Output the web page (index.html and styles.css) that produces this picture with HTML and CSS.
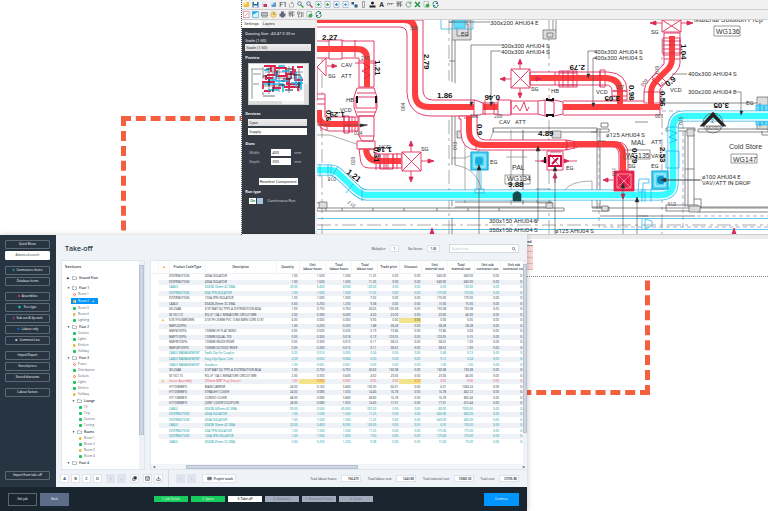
FILE: index.html
```html
<!DOCTYPE html>
<html lang="en">
<head>
<meta charset="utf-8">
<title>Take-off</title>
<link rel="stylesheet" href="styles.css">
</head>
<body>
<div class="desktop">
<div class="frame"></div>

<section class="cad">
  <div class="cad-tools" id="tools-main"></div>
  <div class="cad-tools" id="tools-view"></div>
  <div class="cad-body">
    <form class="cad-panel">
      <div class="tabs"><button type="button" class="tab active">Settings</button><button type="button" class="tab">Layers</button></div>
      <div class="panel-body">
        <p>Drawing Size : A0 47 X 33 m</p>
        <label for="scale">Scale (1:50)</label>
        <select id="scale" class="wide"><option>Scale (1:50)</option></select>
        <h3>Preview</h3>
        <div class="preview">
          <svg viewBox="0 0 57 37" preserveAspectRatio="none">
            <path d="M2 5H14M3 5V35M4 10H12M4 20H10M14 3V14M20 1V30M30 1V28M40 2V29M50 2V28M13 14H54M14 22H52M16 8H54M24 1V24" stroke="#778" stroke-width=".8" fill="none"/>
            <path d="M15 2H26V11H18M27 4H37V10H44V2M14 25V18H25V24H32M29 12H38V20H52M46 5V16H54M35 23H49V27M17 11V16M40 14V25M22 3V8M16 14H24M32 17H36M48 3H54M15 27H22" stroke="#d8234e" stroke-width="1.800" fill="none"/>
            <path d="M14 20H34V28M19 26H30M27 8V17H40M47 8V23M30 2H36M42 19H54M15 6H20M33 7H40M52 12V26M20 16H26" stroke="#18b4e6" stroke-width="1.600" fill="none"/>
            <path d="M17 5H22M28 6V13M34 15H42M44 11H52M20 15V22M38 5H44M36 26H44M14 12H18M30 21H36M42 7V15M50 18V24M24 23V28" stroke="#223" stroke-width="1.200" fill="none"/>
            <path d="M14 32H26M14 28V31" stroke="#555" stroke-width=".8"/>
          </svg>
          <i class="pv-bar"></i><i class="ph-bar"></i>
        </div>
        <h3>Services</h3>
        <div class="indent">
          <select aria-label="Service colour"><option>Cyan</option></select>
          <input type="text" aria-label="Service name" value="Supply">
        </div>
        <h3>Sizes</h3>
        <div class="size"><label for="w">Width</label><input id="w" value="400"><span>mm</span></div>
        <div class="size"><label for="d">Depth</label><input id="d" value="300"><span>mm</span></div>
        <button type="button" class="reselect">Reselect Component</button>
        <h3>Run type</h3>
        <label class="run"><input type="checkbox" checked><b>On</b><span>Continuous Run</span></label>
      </div>
    </form>
    <svg class="drawing" viewBox="317 21 451 214" preserveAspectRatio="xMinYMin slice">
      <rect x="317" y="21" width="451" height="214" fill="#fff"/>
      <!-- walls and grid lines -->
      <g fill="none" stroke="#888" stroke-width=".7">
        <path stroke-dasharray="14 4 3 4" d="M322 50V235M449 21V235M549 21V235M662 40V235M317 226H768"/>
        <path d="M323 50H331V60M328 40V52H336V40M317 136H330L374 151M511 131V206M523 131V206M506 158H527M465 204V130M494 130Q490 150 465 159M455 166Q480 170 482 196M564 192Q570 182 592 182V209M523 131V205M465 159H452M536 190H550V204H537Z"/>
        <path stroke="#555" d="M452 41V166M455 41V166M449 62H455M493 129H597V133H493ZM452 196V207M455 203H552V208H455M550 203V208M317 209H564V212H317ZM342 209V212M373 209V212M404 209V212M437 209V212M468 209V212M499 209V212M592 209H768M592 212H609V208H592M597 130V210M600 130V210M597 130H609V133H591M600 104H768M601 124V128H608V124ZM666 129H695V132H666ZM685 132V208M688 132V208M694 135V206M698 130H768V133H698ZM666 206H698V212H666ZM698 208H768M698 213H768M690 208V213M762 132V136H768M694 200H701V209M685 170H694M317 204H326V212M600 217H695"/>
        <path stroke="#666" fill="#ddd" d="M452 21H471V41H452ZM457 25H468V37H457ZM543 31H556V40H543ZM547 34H553V38H547ZM556 21V31M553 21V31M319 203H327V209H319ZM552 132H561V139H552ZM457 132H462V139H457ZM546 204H553V209H546ZM602 207H608V212H602ZM687 130H694V137H687ZM689 207H700V213H689ZM757 98H768V130H757Z"/>
        <path stroke-dasharray="4 3" stroke="#888cb8" d="M599 134V228H768M599 112H683V230M697 217H768M343 26V43H317"/>
      </g>
      <g stroke="#38b8e6" stroke-width=".8" fill="none">
        <path d="M317 219.500H768M317 230.500H768"/>
        <path d="M642 219V231M645 220V230L652 227V222L645 220M441 21V30H473V21M449 23H468"/>
        <path fill="#62dcff" d="M454 21H465V29H454ZM756 106H768V126H756Z"/>
        <path d="M760 104V128M764 107V125" stroke="#168fb8"/>
      </g>
      <!-- supply duct -->
      <g fill="none" stroke-linejoin="round">
        <path stroke="#2bb6e8" stroke-width="11" d="M317 171H329Q335 171 339 175L355 190Q361 196 367 196H660Q673 196 673 184V129Q673 117 685 117H768"/>
        <path stroke="#fff" stroke-width="9.500" d="M317 171H329Q335 171 339 175L355 190Q361 196 367 196H660Q673 196 673 184V129Q673 117 685 117H768"/>
        <path stroke="#38fbff" stroke-width="6.500" d="M317 171H329Q335 171 339 175L355 190Q361 196 367 196H660Q673 196 673 184V129Q673 117 685 117H768"/>
        <path stroke="#2bb6e8" stroke-width=".8" d="M320 165V178M328 166V178M331 166V177M338 167L332 178M353 185L346 194M362 190V202M642 190V203M645 190V203M651 190V203M666 152H679V169H666ZM667 128H679M668 131L677 134L669 138L677 141L669 144M477 172V190M481 172V190M475 190H484V194H475ZM639 180H649V184H643V193H638Z"/>
        <path fill="#50d5f4" stroke="#12a5dc" stroke-width="1.200" d="M471 153H488V171H471ZM652 172H668V190H652Z"/>
        <path stroke="#c9f7ff" stroke-width="1" d="M474 156H485V168H474ZM655 175H665V187H655Z"/>
        <circle cx="479" cy="162" r="4" fill="#18aee0"/><circle cx="661" cy="181" r="4" fill="#0d8ec2"/>
      </g>
      <!-- extract duct outlines -->
      <g fill="#fff" stroke="#e02a5c" stroke-width=".9">
        <path d="M317 42H374V88H359V59H317M317 28H400Q407 28 407 36V94Q409 117 432 117H475L483 115H498M317 21H423V92Q424 101 433 101H475L483 104H498"/>
        <path d="M498 101H511V116H498ZM511 102H538V115H511ZM538 102L545 101V117L538 115M545 101L554 103V115L545 117M554 101L563 103V115L554 117M563 102H660V116H563M474 101V117M483 103V115"/>
        <path d="M513 110L516 106L520 112L524 103L527 112L529 108" fill="none"/>
        <path d="M511 70H530V89H511ZM511 70L530 89M530 70L511 89M530 73H608Q627 74 627 92V101H612V92Q612 86 606 86H530ZM555 73V86M600 71H605V88H600ZM559 72H577V88H559ZM612 92H627M612 97H627"/>
        <path d="M662 21H681V33H662ZM662 33L681 21M662 21L681 33M664 34H680V64Q680 69 676 73L660 90V104H644V93Q644 86 650 80L664 65ZM663 39H680V56H663ZM663 50H681M664 60H680M652 78L661 87L666 83L657 74Z"/>
        <path d="M459 117H477V132Q477 140 485 141H566L578 143H618Q628 144 628 155V171H619V155Q618 148 613 148H578L566 151H478Q461 151 461 133V120H459ZM464 119H472M566 141V151M476 141V151"/>
        <path d="M357 89H374L377 98V109L374 117H357L354 108V98ZM357 94H375M356 98V109H376V98ZM357 113H375M359 117H374V137H359ZM359 137L362 142H373L374 137M357 142H375V150H357ZM359 150H374V154L378 155H402V169H369Q360 169 360 157ZM376 153V171M380 155V170H393V155M397 154V170M386 155V170"/>
        <path d="M402 153H421V172H402ZM402 153L421 172M421 153L402 172M329 41H342V60H329ZM355 41V58M359 62H374M355 64H377M317 68L326 59V77L317 68V102M317 95H325V118H358V132H329Q317 130 317 119M344 117H349V134H344ZM352 117V134M355 118V132M327 121V131M317 100H325M317 105H325"/>
        <path d="M547 152H563V171H547ZM550 155L560 168M550 153H561"/>
      </g>
      <!-- extract duct flow bands -->
      <g fill="none" stroke="#ff3f3f" stroke-width="6">
        <path d="M317 50H357Q367 50 367 60V88"/>
        <path d="M317 21H404Q415 21 415 32V94Q415 108 429 108H474M483 108H498M563 108H660"/>
        <path d="M530 79H606Q620 80 620 92V108M672 37V60Q672 67 666 72L656 82Q651 87 651 95V108"/>
        <path d="M469 117V131Q469 146 484 146H566L578 145H614Q623 146 623 156V172"/>
        <path d="M319 111V117Q319 125 328 125H358M366 150Q367 162 378 162H401"/>
      </g>
      <g fill="none" stroke="#d4214e" stroke-width=".8">
        <path d="M363 64L370 68L362 72L370 76L364 80M559 74H577M559 86H577M563 72V88M568 72V88M573 72V88M663 42H681M663 46H681M663 54H681M380 155V170M384 155V170M388 155V170M393 155V170M321 119V132M344 117V134M349 117V134M652 80L661 88M644 93H660M567 141V151M574 142V150M485 101V116M494 103V115M613 92H627M600 72V88"/>
        <path fill="#e82350" d="M614 172H634V192H614Z"/><path stroke="#ffacac" d="M617 175H631V189H617ZM617 175L631 189M631 175L617 189"/><circle cx="624" cy="182" r="4"/>
        <path stroke="#d00c3e" stroke-width="2" d="M549 157H561V167H549ZM552 165L558 159"/>
        <path fill="#e02a5c" d="M520 60L518 65H522ZM520 65V70M520 99L518 94H522ZM520 94V89M500 80L505 78V82ZM505 80H511M541 80L536 78V82ZM411 142L409 147H413ZM411 147V153M411 183L409 178H413ZM411 178V172M434 162L428 160V164ZM428 162H421M650 24L656 22V26ZM656 24H662M693 24L687 22V26ZM687 24H681M337 67L332 65V69ZM332 67H327M541 162L546 160V164ZM535 162H541M569 162L564 160V164ZM569 162H577M555 174L553 179H557ZM555 179V184M603 181L608 179V183ZM608 181H613M734 229L732 235H736ZM432 229L430 235H434ZM623 200L621 195H625Z"/>
      </g>
      <g stroke="#444" stroke-width=".6" fill="none">
        <path d="M471 107V46H501M491 107V52H501M449 23H490M588 78V52H596M593 107V59H596M741 115V93H735M672 75H687M538 152V222H533M479 166V235M555 168V235M623 188V235M637 199V235M665 181H702M598 142V148M598 142H606M660 181H700M345 126H368M452 235V219M317 126H330"/>
        <path fill="#222" d="M470 103H473L471 107ZM490 103H493L491 107ZM587 75H590L588 79ZM592 104H595L593 108ZM740 112H743L741 116ZM536 152H540L538 147ZM477 171H481L479 166ZM553 172H557L555 167ZM621 189H625L623 184ZM635 203H639L637 198ZM360 125L367 126L360 128ZM666 179V183L661 181Z"/>
        <circle cx="713" cy="124" r="10"/><path fill="#222" d="M700 127L713 113L726 127H722L713 118L704 127Z"/><path d="M700 127H726M635 123H648M638 217H648"/>
        <path stroke="#111" stroke-width="2" d="M357 97V104M376 97V104M547 99V101H553V99M547 118V116H553V118M545 158V164"/>
        <path fill="#164b50" stroke="#164b50" d="M513 202V195Q517 190 521 195V202Z"/>
        <path d="M505 176H530V185H505ZM714 27H740V37H714ZM731 155H757V164H731ZM624 151H650V160H624Z" stroke="#555"/>
      </g>
      <g class="t">
        <text x="490" y="26">300x200 AHU04 E</text><text x="501" y="49">500x300 AHU04 S</text><text x="501" y="55">400x300 AHU04 S</text>
        <text x="594" y="55">400x300 AHU04 S</text><text x="594" y="61">400x300 AHU04 S</text><text x="688" y="77">400x300 AHU04 S</text><text x="688" y="95">300x200 AHU04 E</text>
        <text x="489" y="224">300x150 AHU04 S</text><text x="489" y="233">350x150 AHU04 S</text><text x="555" y="234">ø125 AHU04 S</text><text x="606" y="138">ø125 AHU04 S</text>
        <text x="702" y="180">ø100 AHU04 E</text><text x="702" y="186">VAV/ATT IN DROP</text>
        <text x="341" y="68">CAV</text><text x="328" y="79">SG</text><text x="341" y="79">ATT</text><text x="346" y="103">HB</text><text x="340" y="113">VCD</text><text x="379" y="150">VCD</text>
        <text x="421" y="152">SG</text><text x="461" y="37">EG</text><text x="531" y="92">SG</text><text x="551" y="94">HB</text><text x="596" y="95">VCD</text><text x="499" y="125">CAV</text><text x="515" y="125">ATT</text>
        <text x="490" y="165">EG</text><text x="566" y="171">EG</text><text x="651" y="35">SG</text><text x="670" y="93">VCD</text><text x="746" y="106">EG</text><text x="651" y="145">ATT</text><text x="651" y="159">VAV</text><text x="628" y="169">SG</text><text x="651" y="169">EG</text>
        <text class="s" x="711" y="124">2</text><text class="s" x="706" y="131">M2001</text>
        <text class="s" x="410" y="31">500</text><text class="s" x="361" y="61">210</text><text class="s" x="354" y="136">024</text><text class="s" x="470" y="119">500</text><text class="s" x="494" y="119">200</text><text class="s" x="616" y="90">007</text><text class="s" x="655" y="119">001</text>
        <text class="s" transform="translate(355 166) rotate(-90)">020</text><text class="s" transform="translate(457 151) rotate(-90)">013</text><text class="s" transform="translate(405 112) rotate(-90)">004</text><text class="s" transform="translate(643 88) rotate(-50)">009</text><text class="s" transform="translate(683 126) rotate(-90)">015</text><text class="s" transform="translate(336 178) rotate(180)">018</text><text class="s" transform="translate(356 206) rotate(215)">017</text><text class="s" transform="translate(676 203) rotate(180)">016</text><text class="s" transform="translate(616 177) rotate(-90)">011</text><text class="s" transform="translate(659 75) rotate(-90)">010</text>
      </g>
      <g class="t l">
        <text x="694" y="23">Material Solution Prep</text><text x="716" y="35">WG136</text><text x="729" y="150">Cold Store</text><text x="733" y="163">WG147</text><text x="631" y="146">MAL</text><text x="626" y="159">WG135</text><text x="512" y="171">PAL</text><text x="507" y="182">WG134</text>
      </g>
      <g class="t b">
        <text x="322" y="41">2.27</text><text x="437" y="99">1.86</text><text x="538" y="137">4.89</text><text x="508" y="188">9.88</text>
        <text transform="translate(375 61) rotate(90)">1.21</text><text transform="translate(424 55) rotate(90)">2.79</text><text transform="translate(500 96) rotate(180)">0.46</text><text transform="translate(585 66) rotate(180)">2.79</text><text transform="translate(477 125) rotate(90)">0.9</text>
        <text transform="translate(629 86) rotate(90)">0.98</text><text transform="translate(620 97) rotate(180)">3.05</text><text transform="translate(681 45) rotate(90)">1.04</text><text transform="translate(660 92) rotate(90)">0.56</text><text transform="translate(668 88) rotate(-40)">0.9</text><text transform="translate(729 104) rotate(180)">3.05</text>
        <text transform="translate(632 149) rotate(90)">0.79</text><text transform="translate(660 148) rotate(90)">2.53</text><text transform="translate(346 174) rotate(38)">1.21</text><text transform="translate(345 113) rotate(180)">1.29</text><text transform="translate(392 148) rotate(180)">1.16</text><text transform="translate(374 148) rotate(90)">0.31</text><text transform="translate(326 111) rotate(90)">0.6</text>
      </g>
    </svg>
  </div>
  <div class="cad-foot"><i class="foot-bar"></i><div class="legend"><span>ed</span><i></i><i></i><i></i><i></i></div></div>
</section>

<main class="app">
  <div class="work">
    <aside class="side">
      <nav>
        <div class="grp"><button>Quick Menu</button><button class="on">Advanced search</button></div>
        <div class="grp"><button><i class="teal">♦</i>Contractors choice</button><button>Database items</button></div>
        <div class="grp"><button><i class="red">■</i>Assemblies</button><button><i class="teal">◆</i>Tree type</button><button><i class="pink">ϟ</i>Sub con &amp; Specials</button><button><i class="navy">◆</i>Labour only</button><button><i>●</i>Comment Line</button></div>
        <div class="grp"><button>Import/Export</button><button>Stored prices</button><button>Stored discounts</button></div>
        <div class="grp"><button>Labour factors</button></div>
      </nav>
      <button>Import from take off</button>
    </aside>
    <div class="content">
      <header class="head">
        <h1>Take-off</h1>
        <label>Multiplier: <input class="num n1" value="1"></label>
        <label>Site factor: <input class="num n2" value="1.00"></label>
        <div class="search"><input type="search" aria-label="Search" placeholder="Search here"><svg viewBox="0 0 8 8"><circle cx="3" cy="3" r="2.300"/><path d="M5 5L7.500 7.500"/></svg></div>
      </header>
      <div class="panes">
        <section class="tree"><div class="tree-in"><h2>Sections</h2><ul id="tree"></ul></div><div class="vbar"><i></i></div></section>
        <section class="grid">
          <div class="grid-in">
            <table><thead><tr><th></th><th><b class="warn">▲</b></th><th>Product Code/Type</th><th>Description</th><th>Quantity</th><th>Unit<br>labour hours</th><th>Total<br>labour hours</th><th>Total<br>labour cost</th><th>Trade price</th><th>Discount</th><th>Unit<br>material cost</th><th>Total<br>material cost</th><th>Unit sub<br>contractor cost</th><th>Unit sub<br>contractor cost</th></tr></thead><tbody id="rows"></tbody></table>
            <div class="vbar long"><i></i></div>
          </div>
          <div class="hbar"><span>◂</span><i></i><span>▸</span></div>
        </section>
      </div>
      <div class="bar">
        <div class="bar-l"><button>A</button><button>B</button><button>C</button><button>D</button><button class="dis sp" disabled>⁞</button><button class="dis" disabled>–</button>
          <button class="sp" aria-label="Copy"><svg viewBox="0 0 8 8"><path d="M3 1H7V5H3Z" fill="#334"/><path d="M5 6V7H1V3H2" /></svg></button>
          <button class="sp" aria-label="Save"><svg viewBox="0 0 8 8"><path d="M1 1H7V7H1ZM1 3H7M3 5L4 6L6 4"/></svg></button>
          <button aria-label="Download"><svg viewBox="0 0 8 8"><path d="M4 1V5M2 3L4 5L6 3M1 5V7H7V5"/></svg></button></div>
        <div class="bar-r"><button class="dis" disabled>↑</button><button class="dis" disabled>↓</button>
          <button class="proj"><svg viewBox="0 0 8 8"><path d="M1 2H7V6H1ZM1 4H7M3 2V6M5 2V6"/></svg>Project totals</button>
          <label class="first">Total labour hours: <input value="194.475"></label><label>Total labour cost: <input value="1443.88"></label><label>Total material cost: <input value="25882.65"></label><label>Total cost: <input value="23765.88"></label></div>
      </div>
    </div>
  </div>
  <footer>
    <button class="exit">Exit job</button><button class="back">Back</button>
    <div class="steps"><button class="done">1. Job Details</button><button class="done">2. Specs</button><button class="cur">3. Take off</button><button>4. Schedules</button><button>5. Document Totals</button><button>6. Totals</button></div>
    <button class="go">Continue</button>
  </footer>
</main>
</div>
<script src="app.js"></script>
</body>
</html>
```
FILE: app.js
```js
const S = (body) => `<svg viewBox="0 0 14 14">${body}</svg>`;
const page = (c) => S(`<path d="M2 1H12V13H2Z" fill="#fff" stroke="#6b8fb5"/><path d="M4 7H10M7 4V10" stroke="${c}" stroke-width="2.500"/>`);
const lens = (c) => S(`<circle cx="5" cy="5" r="3.500" fill="#dff" stroke="#457" stroke-width="1.500"/><path d="M8 8L13 13" stroke="${c}" stroke-width="3"/>`);
const grid = S('<path d="M1 2H13M1 5H8M1 8H13M4 2V12M9 2V12" stroke="#666" stroke-width="1.500" fill="none"/>');
const sync = S('<path d="M2 7A5 5 0 0 1 11 3M12 7A5 5 0 0 1 3 11" stroke="#2b8c56" stroke-width="2" fill="none"/><path d="M12 1V6H7ZM2 13V8H7Z" fill="#2467a5"/>');
const globe = S('<path d="M2 1H11V12H2Z" fill="#fff" stroke="#789"/><circle cx="9" cy="9" r="4" fill="#42ad4e"/>');
const main = [
  S('<path d="M1 4H6L7 2H12V12H1Z" fill="#f4bf37"/><path d="M2 2H7V7H2Z" fill="#fff2a8"/>'),
  S('<path d="M1 2H13V13H1Z" fill="#2467a5"/><path d="M4 2H10V6H4ZM3 9H11V13H3Z" fill="#fff"/>'),
  S('<path d="M2 3H9V12H2Z" fill="#dde"/><path d="M5 6H12V12H5Z" fill="#c33b60"/>'),
  S('<path d="M3 3H12V12H3Z" fill="#6298d4"/><path d="M1 1H7V7H1Z" fill="#d7efff"/>'),
  'F1',
  S('<path d="M3 7V12H11V5H9V2H7V6H5Z" fill="#fff" stroke="#777"/>'),
  lens('#57a05a'), lens('#c34b4b'), page('#34a853'), page('#4aa744'), page('#2c8cca'), page('#5aa2d8'),
  S('<path d="M1 2H6V7H1ZM7 7H13V13H7Z" fill="#2d5b88"/>'),
  S('<path d="M5 1H9V13H5Z" fill="none" stroke="#555"/>'),
  S('<circle cx="7" cy="4" r="3" fill="#222"/><path d="M1 13V9H13V13Z" fill="#222"/>'),
  '<b>A</b>',
  S('<path d="M1 5H13M1 5V9M5 5V8M9 5V8" stroke="#777" stroke-width="1.500"/>'),
  grid,
  S('<path d="M11 4A5 5 0 1 0 12 8M12 1V5H8" stroke="#4a8f62" stroke-width="1.500" fill="none"/>'),
  S('<path d="M2 2L12 12M12 2L2 12" stroke="#26964a" stroke-width="3"/>'),
  globe, sync];
const view = [
  S('<path d="M1 1H12V13H1Z" fill="#fff" stroke="#c58"/><path d="M4 10L10 4" stroke="#c33"/>'),
  S('<path d="M1 1H13V13H1Z" fill="#d9f3ff" stroke="#2a8cc4"/><path d="M1 1H13L1 8Z" fill="#1caee0"/>'),
  S('<path d="M1 3H13V10H1ZM1 12H13" fill="#b8bec8" stroke="#555"/>'),
  S('<circle cx="7" cy="7" r="5.500" fill="#ffe28a" stroke="#c79223"/><path d="M7 3V7H10" stroke="#333" fill="none"/>'),
  S('<path d="M1 5H13V11H1ZM4 1H10V13H4Z" fill="#667"/>'),
  grid, S('<path d="M1 2H6V6H1ZM9 2V12M3 6V12H7M12 2V12" stroke="#777" fill="none" stroke-width="1.500"/>'), globe, sync];
const draw = (id, list) => {
  document.getElementById(id).innerHTML = list.map((i) => `<button type="button">${i}</button>`).join('');
};
draw('tools-main', main);
draw('tools-view', view);

// h = folder heading, otherwise a status colour: r(ed) g(reen) y(ellow)
const tree = [
  ['h0 shut', 'Ground Floor'], ['h0', 'Floor 1'], ['r', 'Room 1'], ['y sel', 'Room 2'], ['g', 'Room 3'], ['y', 'Room 4'], ['g', 'Lighting'],
  ['h0', 'Floor 2'], ['g', 'Sockets'], ['g', 'Lights'], ['y', 'Kitchen'], ['g', 'Hallway'],
  ['h0', 'Floor 3'], ['r', 'Power'], ['g', 'Distribution'], ['r', 'Sockets'], ['g', 'Lights'], ['g', 'Kitchen'], ['y', 'Hallway'],
  ['h1', 'Lounge'], ['g in', 'TV'], ['g in', 'Tray'], ['g in', 'Sockets'], ['g in', 'Testing'],
  ['h1', 'Rooms'], ['y in', 'Room 1'], ['g in', 'Room 2'], ['y in', 'Room 3'], ['g in', 'Room 4'], ['h0', 'Floor 4']];
const folder = '<svg viewBox="0 0 10 8"><path d="M1 1H4L5 2H9V7H1Z"/></svg>';
document.getElementById('tree').innerHTML = tree.map(([c, t]) => c[0] === 'h'
  ? `<li class="${c}"><s>${c.includes('shut') ? '▶' : '▼'}</s>${folder}${t}</li>`
  : `<li class="leaf ${c}"><i></i>${t}${c.includes('sel') ? '<em>▲</em>' : ''}</li>`).join('');

const iso = '1.00|1.500|1.500|11.25|0.00|0.00|640.00|640.00';
const c16 = 'CABLE|6943B 16mm 4C SWA|20.00|0.400|8.000|120.00|0.00|0.00|6.50|130.00';
const i63 = 'DISTRIBUTION|63A TPN ISOLATOR|1.00|1.500|1.500|11.25|0.00|0.00|175.00|175.00';
const i100 = 'DISTRIBUTION|100A SPN ISOLATOR|1.00|1.000|1.000|7.50|0.00|0.00|170.00|170.00';
const c25 = 'CABLE|6943B 25mm 3C SWA|5.00|0.250|1.250|9.38|0.00|0.00|15.00|75.00';
const sel = 'SEL2SAB|8 SP WAY SQ TYPE A DISTRIBUTION BOA|1.00|0.750|0.750|20.63|130.38|0.00|130.38|130.38';
const se10 = 'SE10C110|RQ LP 10A C MINIATURE CIRCUIT BRE|2.00|0.300|0.600|4.50|23.00|0.00|23.00|46.00';
const rows = [
  ['', `DISTRIBUTION|400A ISOLATOR|${iso}`], ['', `DISTRIBUTION|400A ISOLATOR|${iso}`], ['t', c16], ['t', i63], ['', i100], ['', c25], ['', sel], ['', se10],
  ['w', '6181YH25BROWN|6181YH 25MM PVC 1LNG BWN CORE 6181|6.00|0.060|0.360|9.90|0.00|*0.00|0.00|0.00'],
  ['', 'NMFL020PG||1.00|0.250|0.250|1.88|28.28|0.00|28.28|28.28'],
  ['', 'NMFB100PG|100MM HY FLAT BEND|0.05|0.500|0.025|0.19|73.86|0.00|73.86|3.69'],
  ['', 'NMFT100PG|100MM EQUAL TEE|0.05|0.350|0.018|0.13|103.05|0.00|103.05|5.15'],
  ['', 'NMFIR100PG|100MM INSIDE RISER|0.05|0.300|0.015|0.11|38.52|0.00|38.52|1.93'],
  ['', 'NMFOR100PG|100MM OUTSIDE RISER|0.05|0.300|0.015|0.11|38.52|0.00|38.52|1.93'],
  ['t', 'CABLE MANAGEMENT|Swift Clip for Coupler|0.33|0.016|0.005|0.04|0.00|0.00|0.40|0.13'],
  ['t', 'CABLE MANAGEMENT|Easy Clip Opex 1.2m|2.00|0.032|0.064|0.50|0.00|0.00|0.12|0.24'],
  ['t', 'CABLE MANAGEMENT|Sundries|1.00|0.001|0.001|0.03|0.00|0.00|1.00|1.00'],
  ['', sel], ['', se10],
  ['w r', 'Linear Assembly|200mm MRF Tray (Linear)|1.00|*0.000|0.000|0.00|0.00|*0.00|0.00|0.00'],
  ['', 'HT100MMFD|MAIN CARRIER|24.00|0.160|3.840|103.00|66.01|0.00|6.01|1584.24'],
  ['', 'HT100MMFD|STRAIGHT COVER|24.00|0.080|1.920|14.40|16.78|0.00|16.78|402.72'],
  ['', 'HT110MMFD|CURVED COVER|48.00|0.080|3.840|28.80|16.78|0.00|16.78|805.44'],
  ['', 'HT100MMFD|JOINT COVER (COUPLER)|24.00|0.080|1.920|14.40|17.31|0.00|17.31|415.44'],
  ['t', 'CABLE|6943B 240mm 4C SWA|90.00|0.500|45.000|337.50|0.00|0.00|80.00|7200.00'],
  ['t', `DISTRIBUTION|400A ISOLATOR|${iso}`], ['t', `DISTRIBUTION|400A ISOLATOR|${iso}`], ['t', c16], ['t', i63], ['t', i100], ['t', c25]];
document.getElementById('rows').innerHTML = rows.map(([c, r]) => {
  const cells = (r + '|0.00|0.00').split('|').map((v) => v[0] === '*' ? `<td class="hl">${v.slice(1)}</td>` : `<td>${v}</td>`).join('');
  return `<tr class="${c}"><td></td><td>${c[0] === 'w' ? '<b class="warn">▲</b>' : ''}</td>${cells}</tr>`;
}).join('');
```
FILE: styles.css
```css
* { box-sizing: border-box; margin: 0; padding: 0; }
html, body { height: 100%; }
body { background: #fff; font-family: "Open Sans", "Noto Sans", sans-serif; font-size: 3px; }
button, input, select { font: inherit; color: inherit; border: 0; background: none; appearance: none; min-width: 0; border-radius: 0; white-space: nowrap; }
i, em { font-style: normal; }
svg { display: block; }
.desktop { position: relative; height: 100%; min-height: 511px; overflow: hidden; }
.frame { position: absolute; left: 15.7%; right: 15.4%; top: 116px; height: 279px; border: 5px dashed #f4603f; }

/* drawing window */
.cad { position: absolute; left: 31.4%; right: 0; top: 0; background: #fff; font-family: Roboto, sans-serif; font-size: 4px; border-left: 1px dotted #555; border-bottom: 1px dotted #888; }
.cad-tools { display: flex; gap: 2px; align-items: center; height: 10px; padding-left: 1px; background: #f0f0f0; border-bottom: 1px solid #cfcfcf; }
.cad-tools button { width: 7px; height: 8px; font-size: 7px; line-height: 8px; color: #333; }
.cad-body { display: flex; height: 214px; }
.cad-panel { flex: none; width: 75px; background: #353a43; color: #e8eaee; border-right: 2px solid #eee; }
.tabs { display: flex; background: #f0f0f0; color: #333; height: 8px; }
.tab { padding: 0 2px; line-height: 8px; }
.tab.active { background: #fff; }
.panel-body { padding: 2px 4px 0 3px; line-height: 7px; display: flex; flex-direction: column; }
.panel-body h3 { font-size: 4px; line-height: 6px; margin-top: 4px; }
.panel-body select, .panel-body input, .reselect { background: #fff; color: #333; height: 7px; line-height: 7px; padding: 0 1px; border: 0; }
.panel-body select { background: linear-gradient(#eee, #ddd); }
.preview { position: relative; height: 42px; margin: 2px 2px 0 3px; background: #fff; border: 1px solid #ccc; }
.preview svg { width: 57px; height: 37px; }
.pv-bar, .ph-bar { position: absolute; background: #ddd; }
.pv-bar { right: 0; top: 0; bottom: 0; width: 4px; border-top: 20px solid #eee; }
.ph-bar { left: 0; bottom: 0; right: 4px; height: 3px; border-right: 22px solid #f2f2f2; }
.preview + h3 { margin-top: 6px; }
.indent { display: flex; flex-direction: column; gap: 2px; padding: 2px 4px 0 3px; }
.indent + h3 { margin-top: 6px; }
.size { display: grid; grid-template-columns: 20px 20px 1fr; column-gap: 2px; padding-left: 4px; margin-top: 2px; line-height: 7px; color: #b9bdc6; }
.size span { padding-left: 1px; }
.reselect { align-self: center; margin-top: 13px; }
.run { display: flex; align-items: center; gap: 1px; margin: 2px 0 0 4px; }
.panel-body .run input { order: 1; width: 6px; background: #a8c6de; height: 6px; }
.run b { background: #fff; color: #3a8f4a; height: 6px; line-height: 6px; padding: 0 1px; }
.run span { order: 2; margin-left: 3px; color: #c7cad1; }
.drawing { flex: 1; min-width: 0; height: 100%; }
.t { font: 6px Roboto, sans-serif; fill: #333; }
.t .s { font-size: 5px; fill: #555; }
.t.l { font: 7px "Liberation Sans", sans-serif; }
.t.b { font: bold 8px "Liberation Sans", sans-serif; fill: #111; }
.cad-foot { height: 42px; padding-left: 285px; }
.foot-bar { display: block; height: 5px; background: #ececec; border-top: 1px solid #ccc; }
.legend { width: 6px; font-size: 4px; line-height: 6px; }
.legend span { display: block; border-bottom: 1px solid #999; }
.legend i { display: block; height: 6px; background: #fbd9d9; border-bottom: 1px solid #dba; }

/* take-off window */
.app { position: absolute; left: 0; bottom: 0; top: 235px; width: 68.6%; display: flex; flex-direction: column; background: #eff2f7; box-shadow: 1px 0 5px #0003; overflow: hidden; color: #27313e; }
.work { flex: 1; display: flex; min-height: 0; }
.side { width: 56px; flex: none; background: #273442; padding: 5px 6px 7px 5px; display: flex; flex-direction: column; justify-content: space-between; color: #fff; }
.side nav { display: flex; flex-direction: column; gap: 6px; }
.grp { display: flex; flex-direction: column; gap: 2px; }
.side button { height: 9px; border: 1px solid #5d6975; border-radius: 1px; line-height: 7px; text-align: center; }
.side .on { background: #fff; color: #273442; border-color: #fff; }
.side i { margin-right: 2px; font-size: 4px; line-height: 4px; }
.teal { color: #18c6a8; } .red { color: #d6352e; } .pink { color: #e63cc2; } .navy { color: #1460b0; }
.content { flex: 1; min-width: 0; display: flex; flex-direction: column; }
.head { height: 25px; display: flex; align-items: center; padding: 2px 8px 0 9px; flex: none; }
h1 { font-size: 7px; font-weight: 600; line-height: 10px; flex: 1; color: #273442; }
.head label { display: flex; align-items: center; gap: 4px; margin-right: 9px; }
.num, .bar label input { background: #fff; border: 1px solid #dde3ea; height: 7px; text-align: center; font-weight: 600; }
.n1 { width: 9px; } .n2 { width: 13px; }
.search { display: flex; align-items: center; width: 70px; height: 9px; background: #fff; border: 1px solid #d3dae2; padding: 0 2px; }
.search input { flex: 1; }
.search input::placeholder { color: #aab4c0; }
.search svg { width: 4px; height: 4px; fill: none; stroke: #333; stroke-width: 1; }
.panes { flex: 1; display: flex; gap: 5px; padding-left: 5px; min-height: 0; }
.tree { width: 84px; flex: none; display: flex; background: #fff; border: 1px solid #e1e6ed; }
.tree-in { flex: 1; min-width: 0; padding: 3px 0 0 3px; overflow: hidden; }
h2 { font-size: 4px; font-weight: 600; line-height: 6px; margin-bottom: 4px; }
ul { list-style: none; }
li { display: flex; align-items: center; line-height: 6px; }
.h0, .h1 { height: 7px; font-weight: 600; }
.shut { margin-bottom: 3px; }
.h0 { padding-left: 2px; } .h1 { padding-left: 7px; }
li s { text-decoration: none; width: 5px; font-size: 3px; }
li svg { width: 5px; height: 4px; margin-right: 2px; fill: none; stroke: #6b7684; stroke-width: 1; }
.leaf { height: 6px; margin-left: 8px; gap: 2px; color: #566270; }
.in { margin-left: 14px; }
.leaf i { width: 3px; height: 3px; border-radius: 1px; background: #17c65c; }
.leaf.r i { background: #fff; border: 1px solid #f3705a; border-radius: 2px; }
.leaf.y i { background: linear-gradient(90deg, #e8b53c 60%, #fbeac2 60%); }
.leaf.sel { align-self: flex-start; width: 27px; background: #0094ff; color: #fff; padding-left: 2px; margin: 1px 0 1px 6px; }
em, .warn { color: #f0b323; font-size: 4px; line-height: 4px; }
.vbar { width: 5px; background: #eef1f6; padding: 4px 0 34px; flex: none; }
.vbar i { display: block; height: 100%; background: #ced6e3; border: 1px solid #b5c0d0; }
.vbar.long { width: 4px; padding: 3px 0 31px; }
.grid { flex: 1; min-width: 0; background: #fff; border: 1px solid #e1e6ed; border-right: 0; display: flex; flex-direction: column; }
.grid-in { flex: 1; min-height: 0; display: flex; position: relative; }
.grid-in .vbar { position: absolute; right: 0; top: 0; bottom: 0; }
table, thead { display: block; width: 100%; }
tr { display: grid; grid-template-columns: 7fr 11fr 36fr 71fr 23fr 27fr 26fr 26fr 22fr 22fr 26fr 27fr 26fr 27fr; align-items: center; }
thead tr { height: 13px; border-bottom: 1px solid #eef1f6; }
th { font-weight: 600; line-height: 4px; height: 12px; display: grid; align-content: center; text-align: center; white-space: nowrap; min-width: 0; }
th + th { border-left: 1px solid #f3f5f9; }
th br { line-height: 4px; }
tbody { display: grid; height: 171px; grid-template-rows: repeat(31, 1fr); }
tbody tr { min-height: 0; }
tbody tr:nth-child(even) { background: linear-gradient(90deg, #fff 2%, #eef2f7 2%); }
td { text-align: right; line-height: 5px; height: 5px; padding-right: 1px; white-space: nowrap; min-width: 0; }
td:nth-child(2) { text-align: center; }
td:nth-child(3), td:nth-child(4) { text-align: left; }
tr.t { fill: none; font: inherit; color: #00989e; }
tr.r { color: #f0404a; }
.hl { background: #f3e48a; }
.hbar { display: flex; align-items: center; justify-content: space-between; height: 5px; background: #f3f5f9; line-height: 4px; padding: 0 2px; font-size: 4px; }
.hbar i { height: 4px; width: 46%; margin-right: 36%; background: #cfd7e4; border: 1px solid #b5c0d0; }
.bar { height: 17px; flex: none; display: flex; align-items: stretch; }
.bar-l, .bar-r { display: flex; align-items: center; gap: 2px; }
.bar-l { width: 113px; padding-left: 4px; border-right: 1px solid #d5dbe4; }
.bar-r { flex: 1; padding: 0 8px 0 7px; }
.bar button { width: 9px; height: 9px; background: #fff; border: 1px solid #dfe4eb; font-size: 4px; font-weight: 600; line-height: 6px; text-align: center; flex: none; }
.bar .dis { background: #dfe4ef; color: #8b97aa; }
.bar .sp { margin-left: 2px; }
.bar svg { width: 5px; height: 5px; margin: auto; fill: none; stroke: #445; stroke-width: 1; }
.bar .proj { width: 34px; margin-left: 4px; font-size: 3px; display: flex; align-items: center; padding: 0 2px; }
.bar label { display: flex; align-items: center; gap: 4px; margin-left: 5px; white-space: nowrap; }
.bar .first { margin-left: auto; }
.bar label input { width: 20px; text-align: right; padding-right: 1px; }
footer { height: 24px; flex: none; background: #192630; display: flex; align-items: center; padding: 0 8px; color: #fff; }
footer button { height: 13px; width: 29px; text-align: center; }
.exit { border: 1px solid #596672; }
.back { background: #5d6c89; margin-left: 3px; }
.steps { flex: 1; display: flex; justify-content: center; gap: 3px; padding-right: 26px; }
.steps button { width: 34px; height: 6px; line-height: 6px; background: #a1abbc; color: #5f6c80; }
.steps .done { background: #17cc5c; color: #fff; }
.steps .cur { background: #fff; color: #192630; font-weight: 600; }
footer .go { width: 35px; background: #0095ff; }
```
